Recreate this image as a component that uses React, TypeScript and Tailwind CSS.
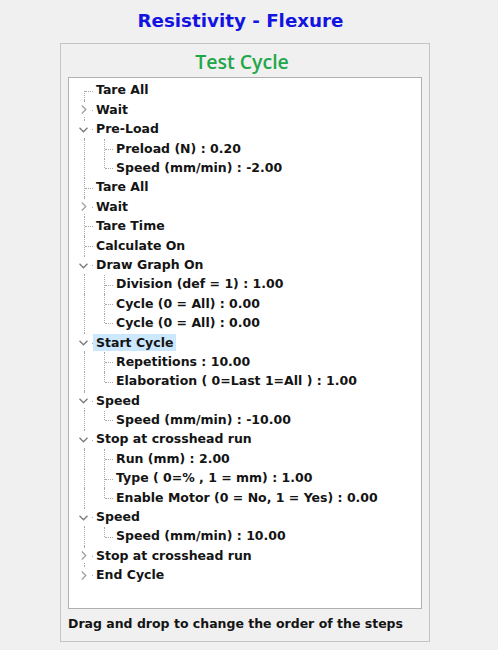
import React from "react";

type Node = { label: string; open?: boolean; selected?: boolean; children?: string[] };

const steps: Node[] = [
  { label: "Tare All" },
  { label: "Wait", open: false, children: [] },
  { label: "Pre-Load", open: true, children: ["Preload (N) : 0.20", "Speed (mm/min) : -2.00"] },
  { label: "Tare All" },
  { label: "Wait", open: false, children: [] },
  { label: "Tare Time" },
  { label: "Calculate On" },
  {
    label: "Draw Graph On",
    open: true,
    children: ["Division (def = 1) : 1.00", "Cycle (0 = All) : 0.00", "Cycle (0 = All) : 0.00"],
  },
  {
    label: "Start Cycle",
    open: true,
    selected: true,
    children: ["Repetitions : 10.00", "Elaboration ( 0=Last 1=All ) : 1.00"],
  },
  { label: "Speed", open: true, children: ["Speed (mm/min) : -10.00"] },
  {
    label: "Stop at crosshead run",
    open: true,
    children: ["Run (mm) : 2.00", "Type ( 0=% , 1 = mm) : 1.00", "Enable Motor (0 = No, 1 = Yes) : 0.00"],
  },
  { label: "Speed", open: true, children: ["Speed (mm/min) : 10.00"] },
  { label: "Stop at crosshead run", open: false, children: [] },
  { label: "End Cycle", open: false, children: [] },
];

const font = { fontFamily: '"DejaVu Sans", Verdana, sans-serif' };

function Chevron({ open }: { open: boolean }) {
  return open ? (
    <svg width="9" height="6" viewBox="0 0 9 6" className="absolute left-[5px] top-[7px]">
      <polyline points="0.5,0.8 4.5,4.8 8.5,0.8" fill="none" stroke="#7a7a7a" strokeWidth="1.3" />
    </svg>
  ) : (
    <svg width="6" height="9" viewBox="0 0 6 9" className="absolute left-[7px] top-[5px]">
      <polyline points="0.8,0.5 4.8,4.5 0.8,8.5" fill="none" stroke="#a0a0a0" strokeWidth="1.3" />
    </svg>
  );
}

// vertical guide: "full" spans the row, "top" ends at mid, "bottom" starts at mid
function VLine({ part }: { part: "full" | "top" | "bottom" | "none" }) {
  if (part === "none") return null;
  const cls =
    part === "full" ? "top-0 bottom-0" : part === "top" ? "top-0 h-1/2" : "top-1/2 bottom-0";
  return <div className={`absolute left-[10px] w-0 border-l border-dotted border-[#a8a8a8] ${cls}`} />;
}

function HLine() {
  return <div className="absolute left-[11px] right-0 top-1/2 h-0 border-t border-dotted border-[#a8a8a8]" />;
}

function Row({
  level,
  label,
  rootLine,
  childLine,
  chevron,
  selected,
}: {
  level: 0 | 1;
  label: string;
  rootLine: "full" | "top" | "bottom" | "none";
  childLine?: "full" | "top";
  chevron?: boolean | undefined;
  selected?: boolean;
}) {
  return (
    <div className="flex h-[19.4px] items-center">
      {level === 1 ? (
        <>
          <div className="relative h-full w-[20px] shrink-0">
            <VLine part={rootLine} />
          </div>
          <div className="relative h-full w-[19px] shrink-0">
            <VLine part={childLine ?? "full"} />
            <HLine />
          </div>
        </>
      ) : (
        <div className="relative h-full w-[19px] shrink-0">
          <VLine part={rootLine} />
          {chevron === undefined ? (
            <HLine />
          ) : (
            <>
              <div className="absolute left-[16px] right-0 top-1/2 h-0 border-t border-dotted border-[#a8a8a8]" />
              <div className="absolute left-[1px] top-[2px] h-[15px] w-[17px] bg-white" />
              <Chevron open={chevron} />
            </>
          )}
        </div>
      )}
      <div
        className={`flex h-[17px] items-center whitespace-nowrap px-[3px] text-[12.5px] font-bold leading-none text-[#141414] ${
          selected ? "bg-[#cce8ff]" : ""
        }`}
      >
        {label}
      </div>
    </div>
  );
}

export default function App() {
  const rows: React.ReactNode[] = [];
  steps.forEach((s, i) => {
    const first = i === 0;
    const last = i === steps.length - 1;
    const rootLine = first ? "bottom" : last ? "top" : "full";
    rows.push(
      <Row
        key={`r${i}`}
        level={0}
        label={s.label}
        rootLine={rootLine}
        chevron={s.children ? !!s.open : undefined}
        selected={s.selected}
      />
    );
    if (s.open && s.children) {
      s.children.forEach((c, j) => {
        rows.push(
          <Row
            key={`r${i}-${j}`}
            level={1}
            label={c}
            rootLine="full"
            childLine={j === s.children!.length - 1 ? "top" : "full"}
          />
        );
      });
    }
  });

  return (
    <div className="h-[650px] w-[498px] overflow-hidden bg-[#f0f0f0]" style={font}>
      <div className="flex h-[43px] w-[481px] items-center justify-center pt-[1px] pb-[2px]">
        <h1 className="text-[18.3px] font-bold leading-none text-[#1414e0]">Resistivity - Flexure</h1>
      </div>
      <div className="ml-[60px] flex h-[599px] w-[370px] flex-col border border-[#c4c4c4]">
        <div className="flex h-[33px] w-[362px] items-center justify-center pt-[2px]">
          <h2
            className="text-[19.5px] font-semibold leading-none text-[#22a64a]"
            style={{ fontFamily: '"Open Sans", sans-serif' }}
          >
            Test Cycle
          </h2>
        </div>
        <div className="ml-[7px] h-[532px] w-[354px] border border-[#b0b0b0] bg-white pl-[5px] pt-[3px]">
          {rows}
        </div>
        <div className="ml-[7px] mt-[9px] text-[12.5px] font-bold leading-none text-[#141414]">
          Drag and drop to change the order of the steps
        </div>
      </div>
    </div>
  );
}
